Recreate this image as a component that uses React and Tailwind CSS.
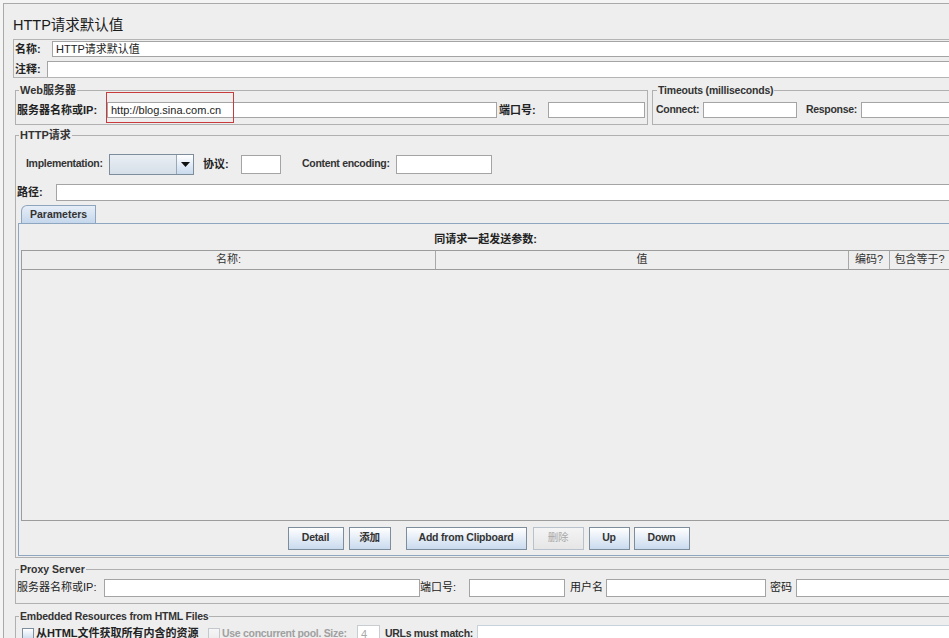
import React from "react";

const Field = ({ className = "", children }) => (
  <div
    className={`bg-white border border-[#a4a4a4] text-[11px] leading-[14px] px-[3px] text-[#222] flex items-center overflow-hidden whitespace-nowrap ${className}`}
  >
    {children}
  </div>
);

const Btn = ({ className = "", disabled = false, children }) => (
  <div
    className={`h-[23px] flex items-center justify-center font-bold text-[10.5px] tracking-[-0.2px] border bg-linear-to-b ${
      disabled
        ? "border-[#b8c2cc] from-[#f4f4f4] to-[#e6e6e6] text-[#a8a8a8] font-normal"
        : "border-[#7d8d9c] from-white to-[#c9daee] text-[#333]"
    } ${className}`}
  >
    {children}
  </div>
);

const Check = ({ disabled = false }) => (
  <div
    className={`w-[12px] h-[12px] shrink-0 border bg-linear-to-b ${
      disabled ? "border-[#c2c8ce] from-[#f6f6f6] to-[#ececec]" : "border-[#7d8d9c] from-white to-[#cddcee]"
    }`}
  />
);

export default function App() {
  return (
    <div className="w-[949px] h-[638px] overflow-hidden whitespace-nowrap bg-[#f4f4f4] font-['Liberation_Sans','Noto_Sans_CJK_SC',sans-serif] text-[11px] text-[#222]">
      <div className="relative mt-[3px] ml-[3px] w-[951px] h-[700px] border-t border-l border-[#a9a9a9] bg-[#eeeeee]">
        {/* Title */}
        <div className="pl-[9px] pt-[13px] text-[14.5px] leading-[16px] text-[#1a1a1a]">HTTP请求默认值</div>

        {/* Name / comment */}
        <div className="mt-[6px] ml-[9px] border border-r-0 border-[#b4b4b4] pl-[1px] pt-[1px]">
          <div className="flex items-center">
            <div className="w-[37px] shrink-0 font-bold leading-[14px]">名称:</div>
            <Field className="flex-1 h-[16px] border-r-0">HTTP请求默认值</Field>
          </div>
          <div className="flex items-center mt-[4px]">
            <div className="w-[32px] shrink-0 font-bold leading-[14px]">注释:</div>
            <Field className="flex-1 h-[16px] border-r-0 border-b-0" />
          </div>
        </div>

        {/* Web server + Timeouts */}
        <div className="flex mt-[6px] ml-[11px]">
          <fieldset className="w-[633px] min-w-0 shrink-0 border border-[#b0b0b0] pb-[5px]">
            <legend className="ml-[3px] px-[1px] font-bold leading-[13px] text-[#333]">Web服务器</legend>
            <div className="flex items-center pt-[5px]">
              <div className="w-[91px] shrink-0 pl-[1px] font-bold">服务器名称或IP:</div>
              <Field className="w-[390px] h-[16px]">http://blog.sina.com.cn</Field>
              <div className="w-[51px] shrink-0 pl-[2px] font-bold">端口号:</div>
              <Field className="w-[97px] h-[16px]" />
            </div>
          </fieldset>
          <fieldset className="flex-1 min-w-0 ml-[4px] border border-r-0 border-[#b0b0b0] pb-[5px]">
            <legend className="ml-[4px] px-[1px] font-bold text-[10.5px] tracking-[-0.2px] leading-[13px] text-[#333]">Timeouts (milliseconds)</legend>
            <div className="flex items-center pt-[5px]">
              <div className="w-[50px] shrink-0 pl-[3px] font-bold text-[10.5px] tracking-[-0.3px] text-[#333]">Connect:</div>
              <Field className="w-[94px] h-[16px]" />
              <div className="w-[64px] shrink-0 pl-[9px] font-bold text-[10.5px] tracking-[-0.3px] text-[#333]">Response:</div>
              <Field className="flex-1 h-[16px]" />
            </div>
          </fieldset>
        </div>

        {/* HTTP request */}
        <fieldset className="mt-[4px] ml-[11px] min-w-0 border border-[#b0b0b0] pb-[1px]">
          <legend className="ml-[3px] px-[1px] font-bold leading-[13px] text-[#333]">HTTP请求</legend>
          <div className="flex items-center pt-[12px] pl-[10px] h-[33px]">
            <div className="w-[83px] shrink-0 font-bold text-[10.5px] tracking-[-0.3px] text-[#333]">Implementation:</div>
            <div className="w-[85px] h-[21px] shrink-0 flex border border-[#7d8d9c]">
              <div className="flex-1 bg-linear-to-b from-[#e9eef3] to-[#d6dfe9]" />
              <div className="w-[17px] border-l border-[#9aa8b6] bg-linear-to-b from-white to-[#c9daee] flex items-center justify-center">
                <svg width="9" height="5" viewBox="0 0 9 5">
                  <path d="M0 0h9L4.5 5z" fill="#111" />
                </svg>
              </div>
            </div>
            <div className="w-[38px] shrink-0 ml-[9px] font-bold">协议:</div>
            <Field className="w-[40px] h-[19px]" />
            <div className="w-[94px] shrink-0 ml-[21px] font-bold text-[10.5px] tracking-[-0.3px] text-[#333]">Content encoding:</div>
            <Field className="w-[96px] h-[19px]" />
          </div>
          <div className="flex items-center mt-[9px]">
            <div className="w-[40px] shrink-0 pl-[1px] font-bold">路径:</div>
            <Field className="flex-1 h-[17px]" />
          </div>

          {/* Tabbed pane */}
          <div className="mt-[4px] ml-[2px]">
            <div className="ml-[3px] w-[75px] h-[18px] border border-b-0 border-[#8fa4bd] rounded-tl-[6px] bg-linear-to-b from-[#e6eef7] to-[#c5d7ec] font-bold text-[10.5px] text-[#333] pl-[8px] leading-[17px]">
              Parameters
            </div>
            <div className="border border-[#8fa6c1] bg-[#eeeeee] pb-[5px]">
              <div className="pt-[9px] leading-[13px] text-center font-bold">同请求一起发送参数:</div>
              <div className="mt-[4px] mx-[2px] border border-[#9c9c9c]">
                <div className="flex h-[19px] border-b border-[#9c9c9c] text-[#333]">
                  <div className="w-[414px] shrink-0 border-r border-[#a8a8a8] flex items-center justify-center">名称:</div>
                  <div className="w-[413px] shrink-0 border-r border-[#a8a8a8] flex items-center justify-center">值</div>
                  <div className="w-[41px] shrink-0 border-r border-[#a8a8a8] flex items-center justify-center">编码?</div>
                  <div className="flex-1 flex items-center justify-center">包含等于?</div>
                </div>
                <div className="h-[250px]" />
              </div>
              <div className="flex justify-center pl-[6px] mt-[6px]">
                <Btn className="w-[56px]">Detail</Btn>
                <Btn className="w-[42px] ml-[5px]">添加</Btn>
                <Btn className="w-[121px] ml-[15px]">Add from Clipboard</Btn>
                <Btn className="w-[51px] ml-[6px]" disabled>删除</Btn>
                <Btn className="w-[41px] ml-[5px]">Up</Btn>
                <Btn className="w-[56px] ml-[4px]">Down</Btn>
              </div>
            </div>
          </div>
        </fieldset>

        {/* Proxy server */}
        <fieldset className="mt-[5px] ml-[11px] min-w-0 border border-[#b0b0b0] pb-[6px]">
          <legend className="ml-[3px] px-[1px] font-bold text-[10.5px] leading-[13px] text-[#333]">Proxy Server</legend>
          <div className="flex items-center pt-[3px]">
            <div className="w-[88px] shrink-0 pl-[1px]">服务器名称或IP:</div>
            <Field className="w-[316px] h-[18px]" />
            <div className="w-[49px] shrink-0">端口号:</div>
            <Field className="w-[96px] h-[18px]" />
            <div className="w-[41px] shrink-0 pl-[5px]">用户名</div>
            <Field className="w-[160px] h-[18px]" />
            <div className="w-[30px] shrink-0 pl-[4px]">密码</div>
            <Field className="flex-1 h-[18px]" />
          </div>
        </fieldset>

        {/* Embedded resources */}
        <fieldset className="mt-[6px] ml-[11px] min-w-0 border border-[#b0b0b0] pb-[6px]">
          <legend className="ml-[3px] px-[1px] font-bold text-[10.5px] tracking-[-0.2px] leading-[13px] text-[#333]">Embedded Resources from HTML Files</legend>
          <div className="flex items-center pt-[2px] pl-[6px]">
            <Check />
            <div className="w-[174px] shrink-0 pl-[2px] font-bold">从HTML文件获取所有内含的资源</div>
            <Check disabled />
            <div className="w-[137px] shrink-0 pl-[2px] font-bold text-[10.5px] tracking-[-0.3px] text-[#a0a0a0]">Use concurrent pool. Size:</div>
            <Field className="w-[23px] h-[18px] border-[#c8cdd2] text-[#a8a8a8]">4</Field>
            <div className="w-[97px] shrink-0 pl-[5px] font-bold text-[10.5px] tracking-[-0.3px] text-[#333]">URLs must match:</div>
            <Field className="flex-1 h-[18px] border-[#c8d2dc]" />
          </div>
        </fieldset>

        {/* highlight box */}
        <div className="absolute left-[102px] top-[88px] w-[128px] h-[31px] border border-[#c83a3c] pointer-events-none" />
      </div>
    </div>
  );
}
